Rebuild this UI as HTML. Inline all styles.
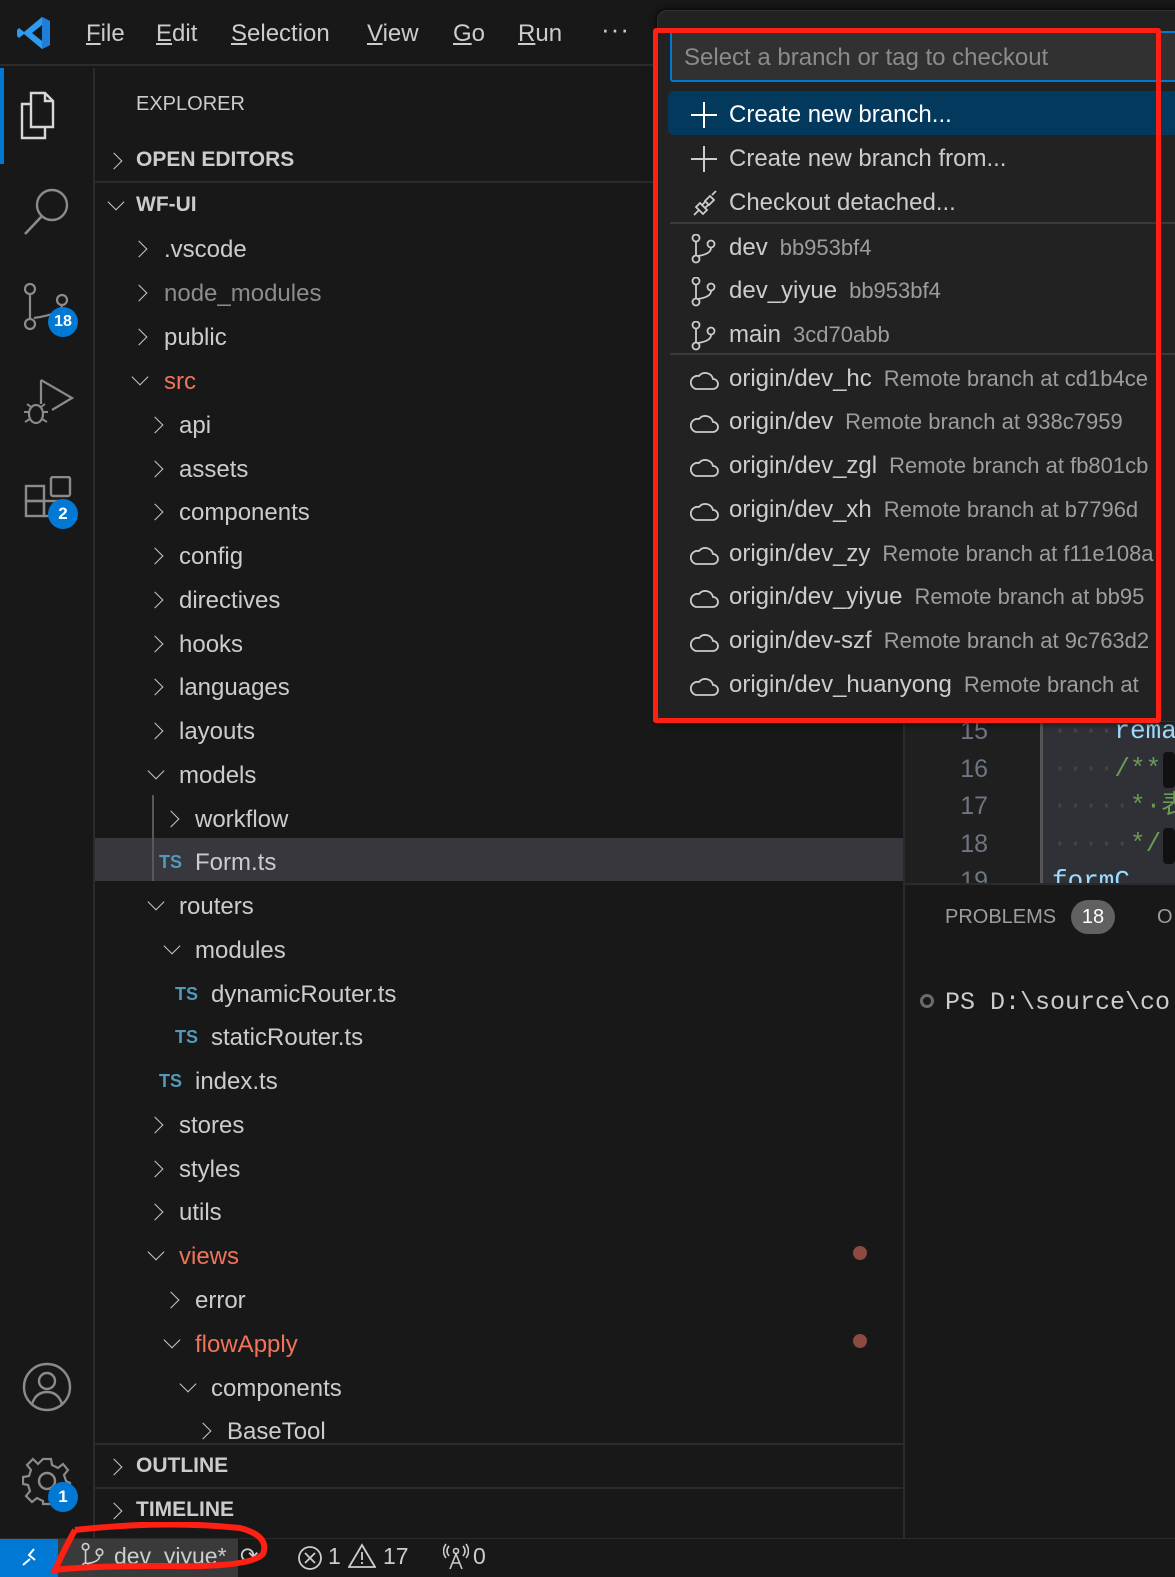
<!DOCTYPE html>
<html><head><meta charset="utf-8"><style>
*{margin:0;padding:0;box-sizing:border-box}
body{width:1175px;height:1577px;overflow:hidden;background:#181818;font-family:"Liberation Sans","Noto Sans CJK SC",sans-serif;color:#cccccc;position:relative}
.a{position:absolute;white-space:nowrap}
.row{position:absolute;height:44px;line-height:44px;font-size:24px;color:#cccccc;white-space:nowrap;margin-top:3px}
.cr,.cd{position:absolute;width:12px;height:12px;border-color:#c5c5c5;border-style:solid;border-width:0;margin-top:2px}
.cr{border-top-width:1.8px;border-right-width:1.8px;transform:rotate(45deg)}
.cd{border-bottom-width:1.8px;border-right-width:1.8px;transform:rotate(45deg)}
.ts{position:absolute;font-size:18px;font-weight:bold;color:#519aba;margin-top:3px}
.red{color:#f0735a}
.qi{position:absolute;left:668px;width:520px;height:44px;line-height:44px;font-size:24px;color:#cccccc;white-space:nowrap;margin-top:2px}
.qi .t{position:absolute;left:61px}
.qi .d{color:#9d9d9d;font-size:22px;margin-left:12px}
.qi svg{position:absolute;left:22px;top:8px}
.sep{position:absolute;left:670px;width:510px;height:2px;background:#3a3a3a}
.badge{position:absolute;width:30px;height:30px;border-radius:50%;background:#0078d4;color:#fff;font-size:17px;font-weight:bold;text-align:center;line-height:30px}
</style></head><body>
<!-- title bar -->
<div class="a" style="left:0;top:0;width:1175px;height:66px;background:#181818;border-bottom:2px solid #2b2b2b"></div>
<svg class="a" style="left:16px;top:16px" width="36" height="34" viewBox="0 0 36 34"><path d="M26 1 L34 5 V29 L26 33 L8 18 L3 22 L1 20 V14 L3 12 L8 16 Z M26 9 L16 17 L26 25 Z" fill="#2e9bf0"/><path d="M26 1 L34 5 V29 L26 33Z" fill="#1f7fd6"/></svg>
<div class="a" style="left:86px;top:20px;font-size:24px"><u>F</u>ile</div>
<div class="a" style="left:156px;top:20px;font-size:24px"><u>E</u>dit</div>
<div class="a" style="left:231px;top:20px;font-size:24px"><u>S</u>election</div>
<div class="a" style="left:367px;top:20px;font-size:24px"><u>V</u>iew</div>
<div class="a" style="left:453px;top:20px;font-size:24px"><u>G</u>o</div>
<div class="a" style="left:518px;top:20px;font-size:24px"><u>R</u>un</div>
<div class="a" style="left:601px;top:14px;font-size:26px;letter-spacing:1px">···</div>

<!-- activity bar -->
<div class="a" style="left:93px;top:68px;width:2px;height:1470px;background:#2b2b2b"></div>
<div class="a" style="left:0;top:68px;width:4px;height:96px;background:#0078d4"></div>
<svg class="a" style="left:20px;top:90px" width="36" height="50" viewBox="0 0 36 50"><path d="M11 10 V3 H25 L33 11 V37 H11 Z M25 3 V11 H33" fill="none" stroke="#d7d7d7" stroke-width="2.4"/><path d="M11 14 H2 V48 H25 V37" fill="none" stroke="#d7d7d7" stroke-width="2.4"/></svg>
<svg class="a" style="left:20px;top:186px" width="52" height="50" viewBox="0 0 52 50"><circle cx="32" cy="19" r="15" fill="none" stroke="#8b8b8b" stroke-width="2.4"/><path d="M22 30 L5 48" stroke="#8b8b8b" stroke-width="2.6"/></svg>
<svg class="a" style="left:22px;top:282px" width="50" height="50" viewBox="0 0 50 50"><circle cx="8" cy="7" r="5" fill="none" stroke="#8b8b8b" stroke-width="2.2"/><circle cx="8" cy="42" r="5" fill="none" stroke="#8b8b8b" stroke-width="2.2"/><circle cx="40" cy="18" r="5" fill="none" stroke="#8b8b8b" stroke-width="2.2"/><path d="M8 12 V37 M40 23 Q40 32 12 36" fill="none" stroke="#8b8b8b" stroke-width="2.2"/></svg>
<div class="badge" style="left:48px;top:307px;font-size:16px">18</div>
<svg class="a" style="left:22px;top:378px" width="52" height="50" viewBox="0 0 52 50"><path d="M19 2 V26 M19 2 L50 20 L30 32" fill="none" stroke="#8b8b8b" stroke-width="2.2"/><ellipse cx="14" cy="36" rx="7" ry="9" fill="none" stroke="#8b8b8b" stroke-width="2.2"/><path d="M2 34 H7 M21 34 H26 M3 44 L8 41 M25 44 L20 41 M5 26 L9 29 M23 26 L19 29" stroke="#8b8b8b" stroke-width="2"/></svg>
<svg class="a" style="left:24px;top:476px" width="50" height="50" viewBox="0 0 50 50"><rect x="2" y="10" width="18" height="15" fill="none" stroke="#8b8b8b" stroke-width="2.4"/><rect x="2" y="25" width="18" height="15" fill="none" stroke="#8b8b8b" stroke-width="2.4"/><rect x="20" y="25" width="14" height="15" fill="none" stroke="#8b8b8b" stroke-width="2.4"/><rect x="27" y="1" width="19" height="19" rx="2" fill="none" stroke="#8b8b8b" stroke-width="2.4"/></svg>
<div class="badge" style="left:48px;top:499px">2</div>
<svg class="a" style="left:22px;top:1362px" width="50" height="50" viewBox="0 0 50 50"><circle cx="25" cy="25" r="23" fill="none" stroke="#8b8b8b" stroke-width="2.4"/><circle cx="25" cy="19" r="8" fill="none" stroke="#8b8b8b" stroke-width="2.4"/><path d="M10 42 Q14 30 25 30 Q36 30 40 42" fill="none" stroke="#8b8b8b" stroke-width="2.4"/></svg>
<svg class="a" style="left:22px;top:1456px" width="50" height="50" viewBox="0 0 50 50"><circle cx="25" cy="25" r="8" fill="none" stroke="#8b8b8b" stroke-width="2.4"/><path d="M21 3 H29 L30 9 L36 12 L41 8 L46 14 L42 19 L44 25 L48 27 V32 L42 33 L40 38 L44 43 L38 48 L33 44 L29 46 V48 H21 V45 L15 42 L10 46 L4 40 L8 35 L6 29 L1 28 V21 L7 20 L9 14 L5 9 L11 3 L16 8 Z" fill="none" stroke="#8b8b8b" stroke-width="2.2"/></svg>
<div class="badge" style="left:48px;top:1482px">1</div>

<!-- sidebar -->
<div class="a" style="left:136px;top:93px;font-size:20px;color:#cccccc">EXPLORER</div>
<div class="cr" style="left:108px;top:153px"></div>
<div class="a" style="left:136px;top:148px;font-size:21px;font-weight:bold;color:#cccccc">OPEN EDITORS</div>
<div class="a" style="left:95px;top:181px;width:808px;height:2px;background:#2b2b2b"></div>
<div class="cd" style="left:110px;top:194px"></div>
<div class="a" style="left:136px;top:193px;font-size:21px;font-weight:bold;color:#cccccc">WF-UI</div>

<!-- selected row -->
<div class="a" style="left:95px;top:838px;width:808px;height:43px;background:#37373d"></div>
<div class="a" style="left:152px;top:795px;width:2px;height:86px;background:#585858"></div>

<div class="cr" style="left:133px;top:241px"></div><div class="row" style="left:164px;top:225px">.vscode</div>
<div class="cr" style="left:133px;top:285px"></div><div class="row" style="left:164px;top:269px;color:#8c8c8c">node_modules</div>
<div class="cr" style="left:133px;top:329px"></div><div class="row" style="left:164px;top:313px">public</div>
<div class="cd" style="left:134px;top:369px"></div><div class="row red" style="left:164px;top:357px">src</div>
<div class="cr" style="left:149px;top:417px"></div><div class="row" style="left:179px;top:401px">api</div>
<div class="cr" style="left:149px;top:461px"></div><div class="row" style="left:179px;top:445px">assets</div>
<div class="cr" style="left:149px;top:504px"></div><div class="row" style="left:179px;top:488px">components</div>
<div class="cr" style="left:149px;top:548px"></div><div class="row" style="left:179px;top:532px">config</div>
<div class="cr" style="left:149px;top:592px"></div><div class="row" style="left:179px;top:576px">directives</div>
<div class="cr" style="left:149px;top:636px"></div><div class="row" style="left:179px;top:620px">hooks</div>
<div class="cr" style="left:149px;top:679px"></div><div class="row" style="left:179px;top:663px">languages</div>
<div class="cr" style="left:149px;top:723px"></div><div class="row" style="left:179px;top:707px">layouts</div>
<div class="cd" style="left:150px;top:763px"></div><div class="row" style="left:179px;top:751px">models</div>
<div class="cr" style="left:165px;top:811px"></div><div class="row" style="left:195px;top:795px">workflow</div>
<div class="ts" style="left:159px;top:849px">TS</div><div class="row" style="left:195px;top:838px">Form.ts</div>
<div class="cd" style="left:150px;top:894px"></div><div class="row" style="left:179px;top:882px">routers</div>
<div class="cd" style="left:166px;top:938px"></div><div class="row" style="left:195px;top:926px">modules</div>
<div class="ts" style="left:175px;top:981px">TS</div><div class="row" style="left:211px;top:970px">dynamicRouter.ts</div>
<div class="ts" style="left:175px;top:1024px">TS</div><div class="row" style="left:211px;top:1013px">staticRouter.ts</div>
<div class="ts" style="left:159px;top:1068px">TS</div><div class="row" style="left:195px;top:1057px">index.ts</div>
<div class="cr" style="left:149px;top:1117px"></div><div class="row" style="left:179px;top:1101px">stores</div>
<div class="cr" style="left:149px;top:1161px"></div><div class="row" style="left:179px;top:1145px">styles</div>
<div class="cr" style="left:149px;top:1204px"></div><div class="row" style="left:179px;top:1188px">utils</div>
<div class="cd" style="left:150px;top:1244px"></div><div class="row red" style="left:179px;top:1232px">views</div>
<div class="a" style="left:853px;top:1246px;width:14px;height:14px;border-radius:50%;background:#8c4a40"></div>
<div class="cr" style="left:165px;top:1292px"></div><div class="row" style="left:195px;top:1276px">error</div>
<div class="cd" style="left:166px;top:1332px"></div><div class="row red" style="left:195px;top:1320px">flowApply</div>
<div class="a" style="left:853px;top:1334px;width:14px;height:14px;border-radius:50%;background:#8c4a40"></div>
<div class="cd" style="left:182px;top:1376px"></div><div class="row" style="left:211px;top:1364px">components</div>
<div class="cr" style="left:197px;top:1423px"></div><div class="row" style="left:227px;top:1407px">BaseTool</div>

<div class="a" style="left:95px;top:1443px;width:808px;height:2px;background:#2b2b2b"></div>
<div class="a" style="left:95px;top:1445px;width:808px;height:93px;background:#181818"></div>
<div class="cr" style="left:108px;top:1459px"></div>
<div class="a" style="left:136px;top:1454px;font-size:21px;font-weight:bold">OUTLINE</div>
<div class="a" style="left:95px;top:1487px;width:808px;height:2px;background:#2b2b2b"></div>
<div class="cr" style="left:108px;top:1503px"></div>
<div class="a" style="left:136px;top:1498px;font-size:21px;font-weight:bold">TIMELINE</div>

<!-- editor -->
<div class="a" style="left:903px;top:68px;width:2px;height:1470px;background:#2b2b2b"></div>
<div class="a" style="left:905px;top:68px;width:270px;height:815px;background:#1f1f1f"></div>
<div class="a" style="left:1040px;top:700px;width:3px;height:183px;background:#555"></div>
<div class="a" style="left:1043px;top:700px;width:132px;height:183px;background:#2f3136"></div>
<div class="a" style="left:948px;top:713px;font-size:25px;color:#6e7681;line-height:37.5px;text-align:right;width:40px">15<br>16<br>17<br>18<br>19</div>
<div class="a" style="left:1052px;top:713px;font-family:'Liberation Mono','Noto Sans CJK SC',monospace;font-size:26px;line-height:37.5px;color:#6a9955">
<span style="color:#444">····</span><span style="color:#9cdcfe">remar</span><br><span style="color:#444">····</span>/**<br><span style="color:#444">·····</span>*·表<br><span style="color:#444">·····</span>*/<br><span style="color:#9cdcfe">formC</span></div>
<div class="a" style="left:1163px;top:752px;width:12px;height:36px;background:#111;border-radius:4px"></div>
<div class="a" style="left:1163px;top:828px;width:12px;height:36px;background:#111;border-radius:4px"></div>
<!-- panel -->
<div class="a" style="left:905px;top:883px;width:270px;height:655px;background:#181818;border-top:2px solid #2b2b2b"></div>
<div class="a" style="left:945px;top:906px;font-size:20px;color:#9d9d9d">PROBLEMS</div>
<div class="a" style="left:1071px;top:900px;width:44px;height:34px;border-radius:17px;background:#616161;color:#fff;font-size:20px;text-align:center;line-height:34px">18</div>
<div class="a" style="left:1157px;top:906px;font-size:20px;color:#9d9d9d">O</div>
<div class="a" style="left:920px;top:994px;width:14px;height:14px;border-radius:50%;border:3px solid #6b6b6b"></div>
<div class="a" style="left:945px;top:988px;font-family:'Liberation Mono',monospace;font-size:25px;color:#cccccc">PS D:\source\co</div>

<!-- quick pick -->
<div class="a" style="left:657px;top:10px;width:530px;height:712px;background:#222222;border-radius:10px;box-shadow:0 0 8px #000;border:1px solid #333"></div>
<div class="a" style="left:670px;top:31px;width:520px;height:51px;background:#313131;border:2px solid #0078d4;border-radius:3px"></div>
<div class="a" style="left:684px;top:44px;font-size:24px;color:#8b8b8b">Select a branch or tag to checkout</div>
<div class="a" style="left:668px;top:91px;width:520px;height:44px;background:#04395e;border-radius:6px"></div>
<div class="qi" style="top:91px;color:#fff"><svg width="28" height="28" viewBox="0 0 28 28"><path d="M14 1 V27 M1 14 H27" stroke="#fff" stroke-width="2"/></svg><span class="t">Create new branch...</span></div>
<div class="qi" style="top:135px"><svg width="28" height="28" viewBox="0 0 28 28"><path d="M14 1 V27 M1 14 H27" stroke="#ccc" stroke-width="2"/></svg><span class="t">Create new branch from...</span></div>
<div class="qi" style="top:179px"><svg width="28" height="28" viewBox="0 0 28 28"><path d="M4 26 L9 21 M9 21 L6 18 L10 14 L17 21 L13 25 Z M12 16 L16 12 M15 19 L19 15 M15 12 L20 7 L24 11 L19 16 Z M22 6 L26 2" fill="none" stroke="#ccc" stroke-width="1.8"/></svg><span class="t">Checkout detached...</span></div>
<div class="sep" style="top:222px"></div>
<svg width="0" height="0" style="position:absolute"><defs><g id="br"><circle cx="6" cy="4" r="3.5" fill="none" stroke="#ccc" stroke-width="1.8"/><circle cx="6" cy="25" r="3.5" fill="none" stroke="#ccc" stroke-width="1.8"/><circle cx="21" cy="10" r="3.5" fill="none" stroke="#ccc" stroke-width="1.8"/><path d="M6 8 V21 M21 14 Q21 20 8 22" fill="none" stroke="#ccc" stroke-width="1.8"/></g><g id="cl"><path d="M6 24 H23 A5 5 0 0 0 23 14 A8 8 0 0 0 9 11 A6.5 6.5 0 0 0 6 24 Z" fill="none" stroke="#ccc" stroke-width="1.8"/></g></defs></svg>
<div class="qi" style="top:224px"><svg width="28" height="30" viewBox="0 0 28 30"><use href="#br"/></svg><span class="t">dev<span class="d">bb953bf4</span></span></div>
<div class="qi" style="top:267px"><svg width="28" height="30" viewBox="0 0 28 30"><use href="#br"/></svg><span class="t">dev_yiyue<span class="d">bb953bf4</span></span></div>
<div class="qi" style="top:311px"><svg width="28" height="30" viewBox="0 0 28 30"><use href="#br"/></svg><span class="t">main<span class="d">3cd70abb</span></span></div>
<div class="sep" style="top:353px"></div>
<div class="qi" style="top:355px"><svg width="30" height="30" viewBox="0 0 30 30"><use href="#cl"/></svg><span class="t">origin/dev_hc<span class="d">Remote branch at cd1b4ce</span></span></div>
<div class="qi" style="top:398px"><svg width="30" height="30" viewBox="0 0 30 30"><use href="#cl"/></svg><span class="t">origin/dev<span class="d">Remote branch at 938c7959</span></span></div>
<div class="qi" style="top:442px"><svg width="30" height="30" viewBox="0 0 30 30"><use href="#cl"/></svg><span class="t">origin/dev_zgl<span class="d">Remote branch at fb801cb</span></span></div>
<div class="qi" style="top:486px"><svg width="30" height="30" viewBox="0 0 30 30"><use href="#cl"/></svg><span class="t">origin/dev_xh<span class="d">Remote branch at b7796d</span></span></div>
<div class="qi" style="top:530px"><svg width="30" height="30" viewBox="0 0 30 30"><use href="#cl"/></svg><span class="t">origin/dev_zy<span class="d">Remote branch at f11e108a</span></span></div>
<div class="qi" style="top:573px"><svg width="30" height="30" viewBox="0 0 30 30"><use href="#cl"/></svg><span class="t">origin/dev_yiyue<span class="d">Remote branch at bb95</span></span></div>
<div class="qi" style="top:617px"><svg width="30" height="30" viewBox="0 0 30 30"><use href="#cl"/></svg><span class="t">origin/dev-szf<span class="d">Remote branch at 9c763d2</span></span></div>
<div class="qi" style="top:661px"><svg width="30" height="30" viewBox="0 0 30 30"><use href="#cl"/></svg><span class="t">origin/dev_huanyong<span class="d">Remote branch at</span></span></div>
<!-- red annotation box -->
<div class="a" style="left:653px;top:28px;width:508px;height:695px;border:5px solid #ff2014;border-radius:3px"></div>

<!-- status bar -->
<div class="a" style="left:0;top:1538px;width:1175px;height:39px;background:#181818;border-top:1px solid #2b2b2b"></div>
<div class="a" style="left:0;top:1539px;width:58px;height:38px;background:#0078d4"></div>
<svg class="a" style="left:20px;top:1545px" width="24" height="24" viewBox="0 0 24 24"><path d="M3 20 L10 14 M14 4 L9 10 L15 15" fill="none" stroke="#fff" stroke-width="2"/></svg>
<div class="a" style="left:58px;top:1539px;width:180px;height:38px;background:#3a3a3a"></div>
<svg class="a" style="left:80px;top:1542px" width="26" height="30" viewBox="0 0 28 30"><use href="#br"/></svg>
<div class="a" style="left:114px;top:1543px;font-size:23px;color:#cccccc">dev_yiyue*</div>
<div class="a" style="left:240px;top:1543px;font-size:22px;color:#ccc">⟳</div>
<svg class="a" style="left:297px;top:1545px" width="26" height="26" viewBox="0 0 26 26"><circle cx="13" cy="13" r="11" fill="none" stroke="#ccc" stroke-width="1.8"/><path d="M8 8 L18 18 M18 8 L8 18" stroke="#ccc" stroke-width="1.8"/></svg>
<div class="a" style="left:328px;top:1543px;font-size:23px;color:#ccc">1</div>
<svg class="a" style="left:348px;top:1543px" width="28" height="26" viewBox="0 0 28 26"><path d="M14 2 L27 24 H1 Z M14 9 V17 M14 19 V21" fill="none" stroke="#ccc" stroke-width="1.8"/></svg>
<div class="a" style="left:383px;top:1543px;font-size:23px;color:#ccc">17</div>
<svg class="a" style="left:443px;top:1543px" width="26" height="28" viewBox="0 0 26 28"><circle cx="13" cy="8" r="2.5" fill="none" stroke="#ccc" stroke-width="1.6"/><path d="M13 11 L7 26 M13 11 L19 26 M9 20 H17 M6 3 Q2 8 6 13 M20 3 Q24 8 20 13 M3 1 Q-2 8 3 15 M23 1 Q28 8 23 15" fill="none" stroke="#ccc" stroke-width="1.6"/></svg>
<div class="a" style="left:473px;top:1543px;font-size:23px;color:#ccc">0</div>
<!-- red scribble around branch -->
<svg class="a" style="left:45px;top:1522px" width="230" height="55" viewBox="0 0 230 55"><path d="M30 8 Q120 -2 195 6 Q225 14 218 32 Q205 46 120 44 Q40 44 10 48 Q22 22 30 8" fill="none" stroke="#ff2014" stroke-width="6"/></svg>
</body></html>
